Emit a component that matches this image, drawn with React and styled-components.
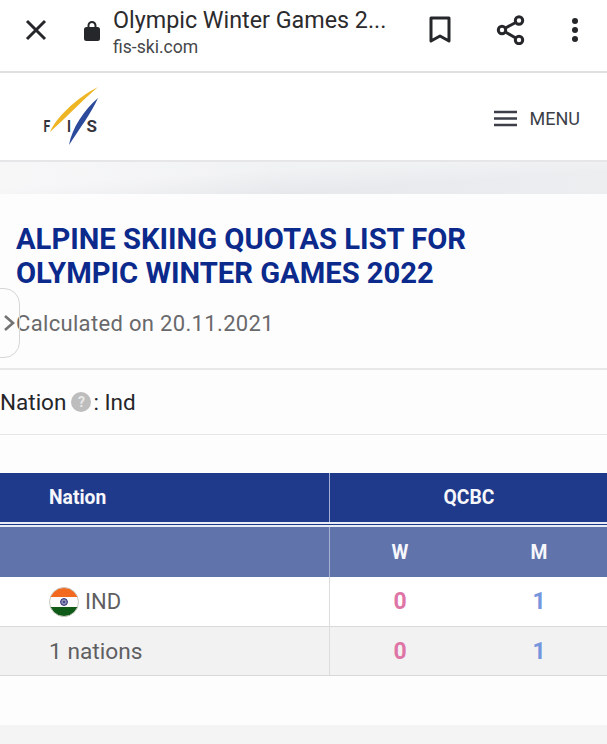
import React from "react";
import styled, { createGlobalStyle } from "styled-components";

const Global = createGlobalStyle`
  html, body { margin: 0; padding: 0; background: #fff; }
  body { font-family: Roboto, "Liberation Sans", sans-serif; }
  * { box-sizing: border-box; }
`;

const Page = styled.div`
  position: relative;
  width: 607px;
  height: 744px;
  overflow: hidden;
  background: #fdfdfe;
`;

const BrowserBar = styled.header`
  height: 73px;
  display: flex;
  align-items: center;
  padding-bottom: 12px;
  background: #fff;
  border-bottom: 2px solid #e0e0e0;
`;

const IconSlot = styled.div`
  width: ${(p) => p.$w}px;
  margin-left: ${(p) => p.$ml || 0}px;
  flex: none;
  display: flex;
  align-items: center;
  justify-content: center;
`;

const TitleBlock = styled.div`
  width: 315px;
  margin-left: 12px;
  margin-top: 3px;
  flex: none;
`;

const PageTitle = styled.div`
  font-size: 23.3px;
  line-height: 30px;
  color: #2b2b2d;
  white-space: nowrap;
`;

const PageHost = styled.div`
  font-size: 17.6px;
  line-height: 22px;
  margin-top: 1px;
  color: #46474a;
`;

const SiteHeader = styled.div`
  height: 89px;
  display: flex;
  align-items: center;
  justify-content: space-between;
  padding: 0 27px 0 40px;
  background: #fff;
  border-bottom: 2px solid #e6e6e8;
`;

const Menu = styled.div`
  display: flex;
  align-items: center;
  gap: 13px;
  margin-top: 4px;
  font-size: 18px;
  color: #3c3f48;
`;

const Band = styled.div`
  height: 32px;
  background:
    linear-gradient(176deg, rgba(255, 255, 255, 0.45) 0 35%, rgba(255, 255, 255, 0) 70%),
    linear-gradient(90deg, #f1f1f3 0%, #e6e8eb 45%, #e9ebee 75%, #edeef0 100%);
`;

const Hero = styled.section`
  padding: 28px 16px 0;
  height: 176px;
  border-bottom: 2px solid #e8e8e8;
`;

const Heading = styled.h1`
  margin: 0;
  font-size: 29.2px;
  line-height: 34px;
  font-weight: 700;
  color: #0b2a8c;
  white-space: nowrap;
`;

const Calculated = styled.p`
  margin: 20px 0 0;
  font-size: 22px;
  line-height: 28px;
  color: #69696b;
  letter-spacing: 0.33px;
`;

const SideTab = styled.div`
  position: absolute;
  left: -20px;
  top: 288px;
  width: 40px;
  height: 70px;
  border: 1px solid #d6d6d6;
  border-radius: 16px;
  display: flex;
  align-items: center;
  justify-content: flex-end;
  padding-right: 4px;
`;

const Filter = styled.div`
  height: 65px;
  display: flex;
  align-items: center;
  font-size: 22.5px;
  color: #26262a;
  border-bottom: 1px solid #e7e7e7;
`;

const Help = styled.span`
  width: 20px;
  height: 20px;
  border-radius: 50%;
  margin: 0 2px 0 5px;
  background: #bdbdbd;
  color: #e8e8e8;
  font-size: 14px;
  font-weight: 700;
  display: inline-flex;
  align-items: center;
  justify-content: center;
`;

const Table = styled.div`
  margin-top: 38px;
  display: grid;
  grid-template-columns: 330px 140px 138px;
`;

const HeadCell = styled.div`
  height: ${(p) => p.$h}px;
  grid-column: ${(p) => p.$span || "auto"};
  background: ${(p) => p.$bg};
  color: #f6f7fb;
  font-size: 19.3px;
  font-weight: 700;
  display: flex;
  align-items: center;
  justify-content: ${(p) => (p.$left ? "flex-start" : "center")};
  padding-left: ${(p) => (p.$left ? "49px" : "0")};
  border-right: ${(p) => (p.$rule ? "1px solid #a5b1d4" : "none")};
`;

const Gap = styled.div`
  grid-column: 1 / -1;
  height: 5px;
  background: linear-gradient(#e9ecf5 0 2px, #1e3888 2px 3px, #e9ecf5 3px 5px);
`;

const NameCell = styled.div`
  height: ${(p) => p.$h}px;
  background: ${(p) => (p.$alt ? "#f2f2f2" : "#fff")};
  border-right: 1px solid #dcdcdc;
  border-bottom: 1px solid #d9d9d9;
  display: flex;
  align-items: center;
  gap: 6px;
  padding-left: 49px;
  font-size: ${(p) => (p.$alt ? "22.7px" : "22px")};
  color: #5f5f62;
`;

const ValueCell = styled.div`
  height: ${(p) => p.$h}px;
  background: ${(p) => (p.$alt ? "#f2f2f2" : "#fff")};
  border-bottom: 1px solid #d9d9d9;
  display: flex;
  align-items: center;
  justify-content: center;
  font-size: 23px;
  font-weight: 700;
  color: ${(p) => p.$color};
`;

const Footer = styled.div`
  position: absolute;
  left: 0;
  right: 0;
  bottom: 0;
  height: 19px;
  background: #f4f4f4;
`;

const Flag = () => (
  <svg width="30" height="30" viewBox="0 0 30 30" aria-hidden="true">
    <defs>
      <clipPath id="flag-clip"><circle cx="15" cy="15" r="14.5" /></clipPath>
    </defs>
    <g clipPath="url(#flag-clip)">
      <rect width="30" height="10" fill="#f2691f" />
      <rect y="10" width="30" height="10" fill="#fbfbfb" />
      <rect y="20" width="30" height="10" fill="#0f5a17" />
    </g>
    <circle cx="15" cy="15" r="14.5" fill="none" stroke="#c9c9c0" strokeWidth="1" />
    <circle cx="15" cy="15" r="3.4" fill="#8f90b8" stroke="#2a2c78" strokeWidth="1" />
    <circle cx="15" cy="15" r="1" fill="#2a2c78" />
  </svg>
);

const FisLogo = () => (
  <svg width="66" height="66" viewBox="0 0 66 66" aria-label="FIS logo">
    <path d="M10 48 C16 34 36 14 58 3 C46 13 32 28 10 48 Z" fill="#eeb524" />
    <path d="M29 61 C32 44 44 26 58 14 C52 28 40 44 29 61 Z" fill="#2c4a9c" />
    <g fontFamily="Roboto, sans-serif" fontWeight="700" fontSize="17" fill="#34343a">
      <text transform="translate(3.5 47.5) scale(0.72 1)">F</text>
      <text transform="translate(27 47.5) scale(0.8 1)">I</text>
      <text x="46.5" y="47.5">S</text>
    </g>
  </svg>
);

export default function App() {
  return (
    <Page>
      <Global />
      <BrowserBar>
        <IconSlot $w={30} $ml={21}>
          <svg width="26" height="26" viewBox="0 0 26 26" fill="none" stroke="#26272b" strokeWidth="3">
            <path d="M4 4 L22 22 M22 4 L4 22" />
          </svg>
        </IconSlot>
        <IconSlot $w={18} $ml={32}>
          <svg width="18" height="22" viewBox="0 0 18 22" fill="#26272b">
            <path d="M4.5 9 V6.5 a4.5 4.5 0 0 1 9 0 V9 h-2 V6.5 a2.5 2.5 0 0 0 -5 0 V9 Z" />
            <rect x="1" y="8" width="16" height="14" rx="2.5" />
          </svg>
        </IconSlot>
        <TitleBlock>
          <PageTitle>Olympic Winter Games 2...</PageTitle>
          <PageHost>fis-ski.com</PageHost>
        </TitleBlock>
        <IconSlot $w={24}>
          <svg width="22" height="28" viewBox="0 0 22 28" fill="none" stroke="#26272b" strokeWidth="3" strokeLinejoin="round">
            <path d="M2 2 H20 V25 L11 20 L2 25 Z" />
          </svg>
        </IconSlot>
        <IconSlot $w={30} $ml={44}>
          <svg width="30" height="30" viewBox="0 0 30 30" fill="none" stroke="#26272b" strokeWidth="3">
            <circle cx="23" cy="5.5" r="3.7" />
            <circle cx="6" cy="15" r="3.7" />
            <circle cx="23" cy="25" r="3.7" />
            <path d="M9.5 13 L19.7 7.5 M9.5 17 L19.7 23" />
          </svg>
        </IconSlot>
        <IconSlot $w={8} $ml={45}>
          <svg width="8" height="26" viewBox="0 0 8 26" fill="#26272b">
            <circle cx="4" cy="4" r="3" />
            <circle cx="4" cy="13" r="3" />
            <circle cx="4" cy="22" r="3" />
          </svg>
        </IconSlot>
      </BrowserBar>

      <SiteHeader>
        <FisLogo />
        <Menu>
          <svg width="23" height="17" viewBox="0 0 23 17" stroke="#3c3f48" strokeWidth="2.4">
            <path d="M0 2 H23 M0 8.5 H23 M0 15 H23" />
          </svg>
          MENU
        </Menu>
      </SiteHeader>

      <Band />

      <Hero>
        <Heading>
          ALPINE SKIING QUOTAS LIST FOR
          <br />
          OLYMPIC WINTER GAMES 2022
        </Heading>
        <Calculated>Calculated on 20.11.2021</Calculated>
      </Hero>

      <SideTab>
        <svg width="12" height="18" viewBox="0 0 12 18" fill="none" stroke="#737373" strokeWidth="2.6">
          <path d="M2 2 L10 9 L2 16" />
        </svg>
      </SideTab>

      <Filter>
        Nation<Help>?</Help>: Ind
      </Filter>

      <Table>
        <HeadCell $h={49} $bg="#1f3a8a" $left $rule>Nation</HeadCell>
        <HeadCell $h={49} $bg="#1f3a8a" $span="2 / span 2">QCBC</HeadCell>
        <Gap />
        <HeadCell $h={50} $bg="#6173ab" $rule />
        <HeadCell $h={50} $bg="#6173ab">W</HeadCell>
        <HeadCell $h={50} $bg="#6173ab">M</HeadCell>

        <NameCell $h={50}><Flag />IND</NameCell>
        <ValueCell $h={50} $color="#de75a6">0</ValueCell>
        <ValueCell $h={50} $color="#7596dd">1</ValueCell>

        <NameCell $h={49} $alt>1 nations</NameCell>
        <ValueCell $h={49} $alt $color="#de75a6">0</ValueCell>
        <ValueCell $h={49} $alt $color="#7596dd">1</ValueCell>
      </Table>

      <Footer />
    </Page>
  );
}
